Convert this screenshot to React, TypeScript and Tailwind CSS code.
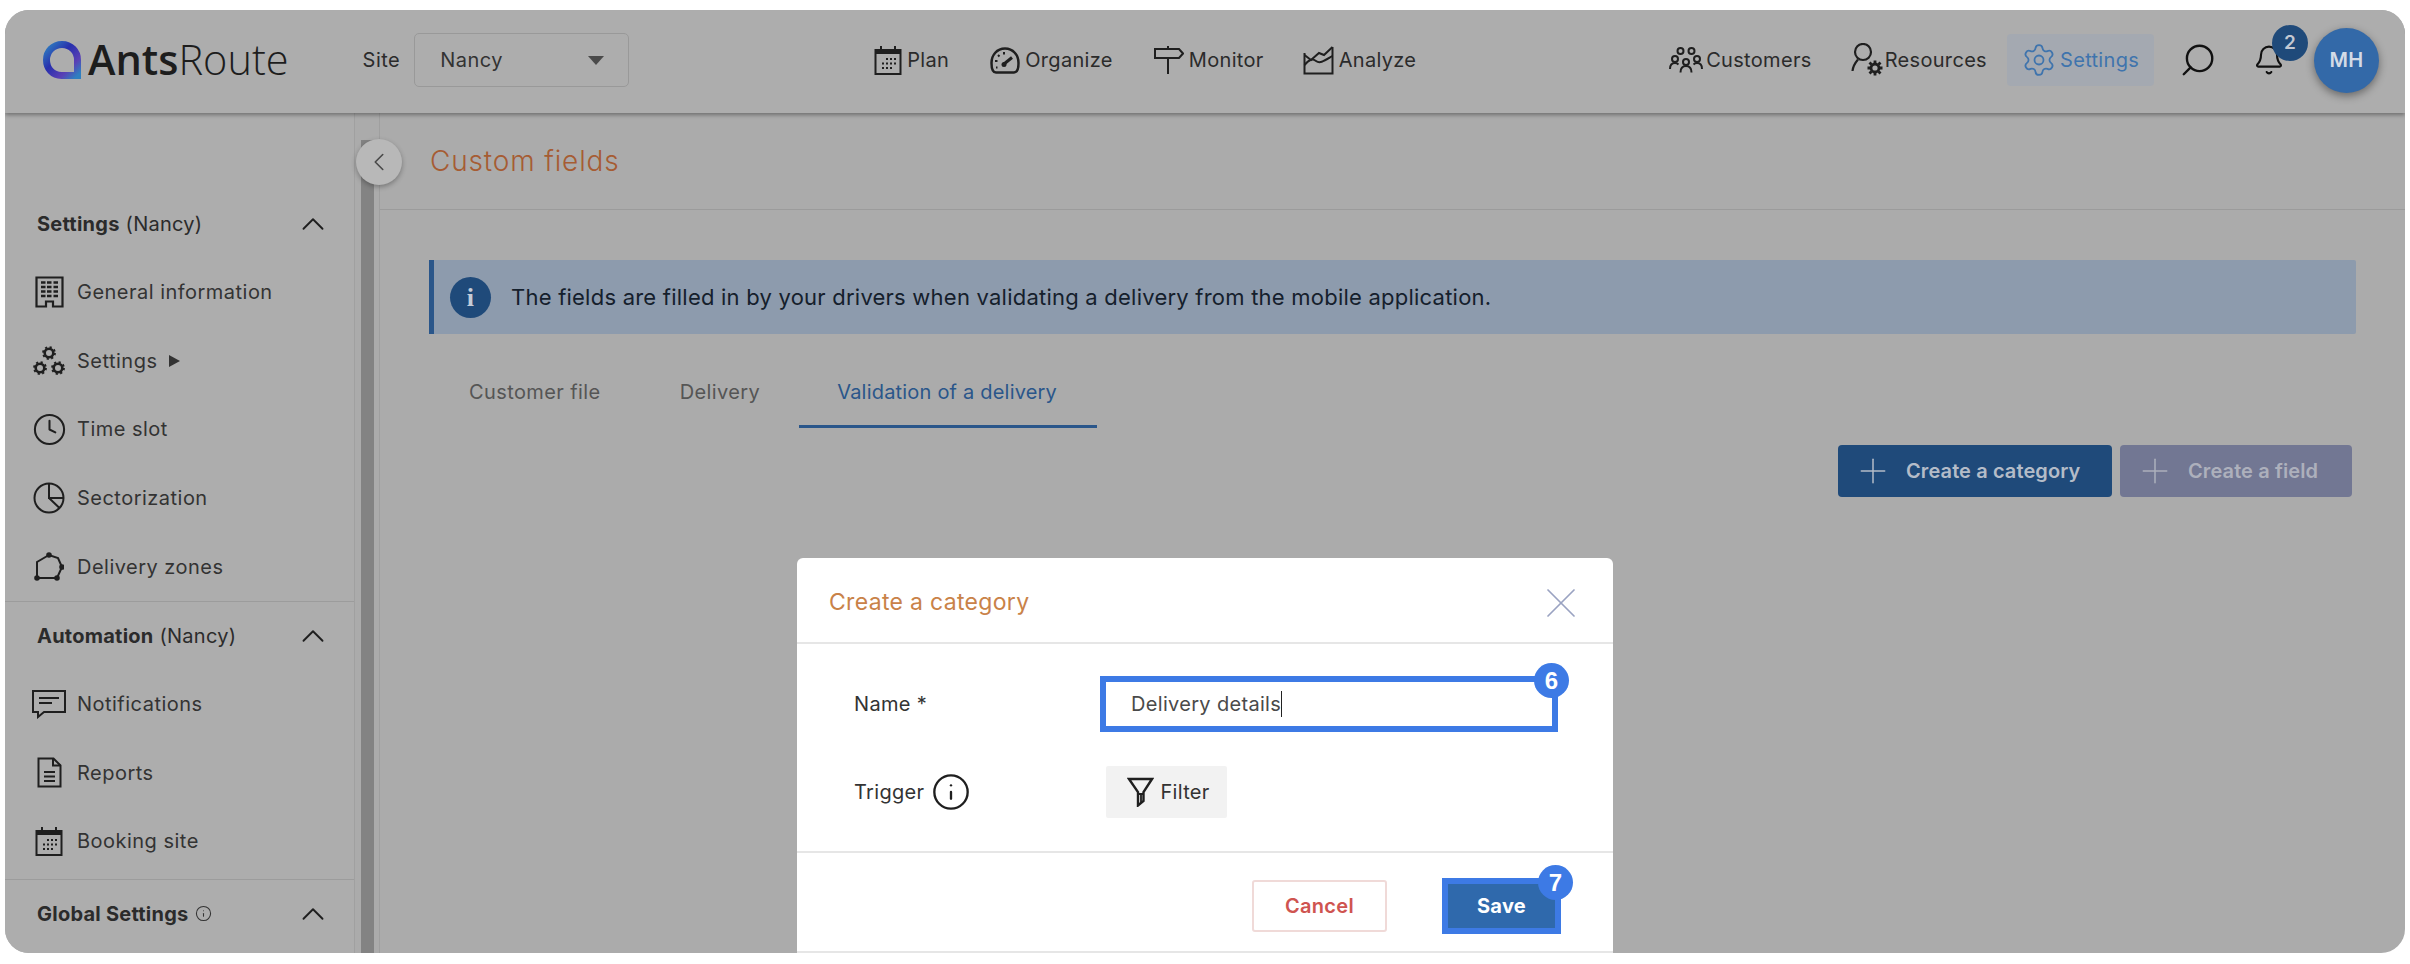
import { ChevronLeft, ChevronUp, Plus, X, Search, Bell, Clock, Info } from 'lucide-react'
import type { ReactNode } from 'react'

const ink = '#1f1f1f'

function Calendar() {
  return (
    <svg width="28" height="29" viewBox="0 0 28 29" fill="none" stroke={ink} strokeWidth="2">
      <rect x="1.500" y="4" width="25" height="24" />
      <path d="M1.500 6h25" strokeWidth="4" />
      <path d="M7 0v4M21 0v4" />
      <g strokeWidth="2.200">
        <path d="M12 13h2M16 13h2M20 13h2M8 17.500h2M12 17.500h2M16 17.500h2M20 17.500h2M8 22h2M12 22h2M16 22h2" />
      </g>
    </svg>
  )
}

function Gauge() {
  return (
    <svg width="30" height="27" viewBox="0 0 30 27" fill="none" stroke={ink} strokeWidth="2.500">
      <path d="M6 25.500C3 25.500 1.500 22 1.500 16C1.500 8 7 1.500 15 1.500C23 1.500 28.500 8 28.500 16C28.500 22 27 25.500 24 25.500Z" />
      <path d="M14 17L22 10.500" strokeWidth="3" />
      <circle cx="14" cy="17.500" r="2.500" fill={ink} stroke="none" />
      <path d="M14 5v2.500M8 8l1.500 1.500M5 14h2.500M6 20.500h1.500" strokeWidth="2" />
    </svg>
  )
}

function Signpost() {
  return (
    <svg width="30" height="30" viewBox="0 0 30 30" fill="none" stroke={ink} strokeWidth="2">
      <path d="M1 4h24l4 4.500-4 4.500H1zM14 1v3M14 13v16" />
    </svg>
  )
}

function Chart() {
  return (
    <svg width="31" height="30" viewBox="0 0 31 30" fill="none" stroke={ink} strokeWidth="2">
      <path d="M1.500 8v20.500h28V2" />
      <path d="M1.500 10L8 15L16 8L21 10L29.500 2" />
      <path d="M1.500 20C6 15 9 13 13 16C17 19 21 16 29.500 11" />
    </svg>
  )
}

function People() {
  return (
    <svg width="34" height="26" viewBox="0 0 34 26" fill="none" stroke={ink} strokeWidth="2">
      <circle cx="11.500" cy="4" r="3" />
      <circle cx="22.500" cy="4" r="3" />
      <circle cx="6" cy="12" r="3" />
      <circle cx="17" cy="15" r="3" />
      <circle cx="28" cy="12" r="3" />
      <path d="M1 22c0-4 2-6 5-6 1.500 0 2.500.5 3.500 1.500M33 22c0-4-2-6-5-6-1.500 0-2.500.5-3.500 1.500M11.500 25.500c0-4 2-6.500 5.500-6.500s5.500 2.500 5.500 6.500" />
    </svg>
  )
}

function PersonGear() {
  return (
    <svg width="34" height="34" viewBox="0 0 34 34" fill="none" stroke={ink} strokeWidth="2.200">
      <ellipse cx="12" cy="9" rx="8" ry="8" />
      <path d="M7 16.500C4 20 2 23 1.500 28" />
      <circle cx="24" cy="25" r="4" strokeWidth="2.800" />
      <path d="M24 17.500v3M24 29.500v3M16.500 25h3M28.500 25h3M18.500 19.500l2 2M27.500 28.500l2 2M18.500 30.500l2-2M27.500 21.500l2-2" strokeWidth="2.800" />
    </svg>
  )
}

function Building() {
  return (
    <svg width="29" height="32" viewBox="0 0 29 32" fill="none" stroke={ink} strokeWidth="2.200">
      <path d="M1.500 1.500h26v29H18v-5h-7v5H1.500z" />
      <path d="M6 6.500h4.500M12 6.500h4.500M18.500 6.500h4.500M6 11h4.500M12 11h4.500M18.500 11h4.500M6 15.500h4.500M12 15.500h4.500M18.500 15.500h4.500M6 20h4.500M12 20h4.500M18.500 20h4.500" strokeWidth="2.400" />
    </svg>
  )
}

function Gears() {
  const ring = (cx: number, cy: number) => (
    <g key={`${cx}-${cy}`}>
      <circle cx={cx} cy={cy} r="4.300" strokeWidth="2.600" />
      <circle cx={cx} cy={cy} r="6" strokeWidth="1.800" strokeDasharray="2.200 2.500" />
    </g>
  )
  return (
    <svg width="32" height="30" viewBox="0 0 32 30" fill="none" stroke={ink}>
      {ring(16, 7)}
      {ring(7, 22)}
      {ring(25, 22)}
    </svg>
  )
}

function Pie() {
  return (
    <svg width="32" height="32" viewBox="0 0 32 32" fill="none" stroke={ink} strokeWidth="2">
      <circle cx="16" cy="16" r="14.500" />
      <path d="M16 1.500V16H30.500M16 16l10.500 10" />
    </svg>
  )
}

function Zone() {
  return (
    <svg width="30" height="30" viewBox="0 0 30 30" fill="none" stroke={ink} strokeWidth="2">
      <path d="M3 26L3 10L15 3L24 6L28 15L23 26Z" />
      <circle cx="3" cy="26" r="1.800" fill={ink} />
      <circle cx="23" cy="26" r="1.800" fill={ink} />
      <circle cx="15" cy="3" r="1.800" fill={ink} />
      <circle cx="28" cy="15" r="1.800" fill={ink} />
    </svg>
  )
}

function Message() {
  return (
    <svg width="34" height="30" viewBox="0 0 34 30" fill="none" stroke={ink} strokeWidth="2">
      <path d="M1 2h32v21H12l-6 5v-5H1z" />
      <path d="M7 9h20M7 14h13" />
    </svg>
  )
}

function FileDoc() {
  return (
    <svg width="25" height="31" viewBox="0 0 25 31" fill="none" stroke={ink} strokeWidth="2">
      <path d="M1.500 1.500h15l7 7v21h-22z" />
      <path d="M16 1.500v7h7.500M7 15h11M7 19.500h11M7 24h11" />
    </svg>
  )
}

function Funnel() {
  return (
    <svg width="27" height="30" viewBox="0 0 27 30" fill="none" stroke={ink} strokeWidth="2.400" strokeLinejoin="miter">
      <path d="M2 2H25L16.500 15V24L11 28.500V15Z" />
      <path d="M11 17h5.500M14 18v8" strokeWidth="1.800" />
    </svg>
  )
}

function LogoMark() {
  return (
    <svg width="38" height="38" viewBox="0 0 38 38" fill="none">
      <defs>
        <linearGradient id="logo" x1="0" y1="0" x2="1" y2="1">
          <stop offset="0" stopColor="#2f7fc0" />
          <stop offset="0.4" stopColor="#2830ad" />
          <stop offset="0.75" stopColor="#5a3fb5" />
          <stop offset="1" stopColor="#2f7fc0" />
        </linearGradient>
      </defs>
      <path d="M34.500 34.500H18.500C9.500 34.500 3.500 27.500 3.500 19C3.500 10.500 10 3.500 19 3.500C28 3.500 34.500 10.500 34.500 19Z" stroke="url(#logo)" strokeWidth="7" />
    </svg>
  )
}

function NavItem({ icon, label, className }: { icon: ReactNode; label: string; className?: string }) {
  return (
    <div className={`flex items-center text-[20px] text-[#2b2b2b] ${className ?? 'gap-[5px]'}`}>
      {icon}
      <span>{label}</span>
    </div>
  )
}

function SideItem({ icon, label, extra }: { icon: ReactNode; label: string; extra?: ReactNode }) {
  return (
    <div className="flex h-[68.6px] items-center pl-[21px] text-[20px] text-[#333333]">
      <div className="flex w-[46px] shrink-0 justify-center">{icon}</div>
      <span className="ml-[5px]">{label}</span>
      {extra}
    </div>
  )
}

function SideHead({ bold, rest }: { bold: string; rest?: ReactNode }) {
  return (
    <div className="flex h-[68px] items-center pr-[22px] pl-[32px] text-[20px] tracking-[0.012em] text-[#2b2b2b]">
      <span className="font-bold">{bold}</span>
      {rest}
      <ChevronUp size={38} strokeWidth={1.2} className="ml-auto text-[#1f1f1f]" />
    </div>
  )
}

export default function App() {
  return (
    <div className="h-[964px] w-[2410px] bg-white px-[5px] pt-[10px] pb-[11px] font-['Inter',sans-serif] tracking-[0.03em]">
      <div className="relative flex h-full flex-col overflow-hidden rounded-[24px] bg-[#ababab]">
        <header className="z-10 flex h-[103px] shrink-0 items-center bg-[#adadad] pb-[3px] pl-[38px] shadow-[0_2px_4px_rgba(0,0,0,0.35)]">
          <LogoMark />
          <div className="ml-[7px] font-['Open_Sans',sans-serif] text-[41.5px] leading-none tracking-normal text-[#1d1d1d]">
            <span className="font-semibold">Ants</span>
            <span className="font-light">Route</span>
          </div>
          <span className="ml-[74px] text-[20px] text-[#2b2b2b]">Site</span>
          <div className="ml-[14px] flex h-[54px] w-[215px] items-center justify-between rounded-[5px] border border-[#999999] pr-[24px] pl-[25px] text-[20px] text-[#333333]">
            Nancy
            <span className="h-0 w-0 border-x-[8px] border-t-[9px] border-x-transparent border-t-[#4a4a4a]" />
          </div>
          <div className="ml-[245px] flex items-center gap-[41px] tracking-[0.02em]">
            <NavItem icon={<Calendar />} label="Plan" />
            <NavItem icon={<Gauge />} label="Organize" />
            <NavItem icon={<Signpost />} label="Monitor" />
            <NavItem icon={<Chart />} label="Analyze" className="-ml-[2px] gap-[5px]" />
          </div>
          <div className="mr-[26px] ml-auto flex items-center tracking-[0.02em]">
            <NavItem icon={<People />} label="Customers" className="gap-[3px]" />
            <NavItem icon={<PersonGear />} label="Resources" className="ml-[39px] gap-0" />
            <div className="ml-[20px] flex h-[52px] w-[147px] items-center gap-[3px] rounded-[4px] bg-[#a4a9b1] pl-[14px] text-[20px] text-[#3f74ad]">
              <svg width="36" height="36" viewBox="0 0 24 24" fill="none" stroke="currentColor" strokeWidth="1.200" strokeLinecap="round" strokeLinejoin="round">
                <path d="M9.671 4.136a2.34 2.34 0 0 1 4.659 0 2.34 2.34 0 0 0 3.319 1.915 2.34 2.34 0 0 1 2.33 4.033 2.34 2.34 0 0 0 0 3.831 2.34 2.34 0 0 1-2.33 4.033 2.34 2.34 0 0 0-3.319 1.915 2.34 2.34 0 0 1-4.659 0 2.34 2.34 0 0 0-3.32-1.915 2.34 2.34 0 0 1-2.33-4.033 2.34 2.34 0 0 0 0-3.831A2.34 2.34 0 0 1 6.35 6.051a2.34 2.34 0 0 0 3.319-1.915" />
                <circle cx="12" cy="12" r="3" />
              </svg>
              <span>Settings</span>
            </div>
            <Search size={38} strokeWidth={1.5} className="ml-[25px] -scale-x-100 text-[#111111]" />
            <div className="relative mr-[29px] ml-[36px]">
              <Bell size={32} strokeWidth={1.6} className="text-[#111111]" />
              <div className="absolute -top-[19px] left-[19px] flex h-[36px] w-[36px] items-center justify-center rounded-full bg-[#1f4a7a] text-[19px] font-semibold text-[#c2c8d2]">
                2
              </div>
            </div>
            <div className="flex h-[65px] w-[65px] items-center justify-center rounded-full bg-[#3369a8] text-[20px] font-semibold text-[#d3dbe6] shadow-[0_3px_8px_rgba(0,0,0,0.4)]">
              MH
            </div>
          </div>
        </header>

        <div className="relative flex min-h-0 flex-1">
          <aside className="flex w-[350px] shrink-0 flex-col border-r border-[#a0a0a0] bg-[#adadad] pt-[77px]">
            <SideHead bold="Settings" rest={<span className="ml-[6px] font-normal">(Nancy)</span>} />
            <SideItem icon={<Building />} label="General information" />
            <SideItem
              icon={<Gears />}
              label="Settings"
              extra={<span className="ml-[12px] h-0 w-0 border-y-[6px] border-l-[11px] border-y-transparent border-l-[#333333]" />}
            />
            <SideItem icon={<Clock size={35} strokeWidth={1.4} className="text-[#1f1f1f]" />} label="Time slot" />
            <SideItem icon={<Pie />} label="Sectorization" />
            <SideItem icon={<Zone />} label="Delivery zones" />
            <div className="border-t border-[#9c9c9c]">
              <SideHead bold="Automation" rest={<span className="ml-[6px] font-normal">(Nancy)</span>} />
            </div>
            <SideItem icon={<Message />} label="Notifications" />
            <SideItem icon={<FileDoc />} label="Reports" />
            <SideItem icon={<Calendar />} label="Booking site" />
            <div className="mt-[3px] border-t border-[#9c9c9c]">
              <SideHead bold="Global Settings" rest={<Info size={17} strokeWidth={1.5} className="ml-[6px] text-[#333333]" />} />
            </div>
          </aside>

          <div className="flex w-[25px] shrink-0 border-r border-[#9f9f9f] pt-[27px] pl-[6px]">
            <div className="w-[13px] bg-[#838383]" />
          </div>

          <div className="absolute top-[26px] left-[351px] flex h-[46px] w-[46px] items-center justify-center rounded-full bg-[#b8b8b8] text-[#4a4a4a] shadow-[0_2px_5px_rgba(0,0,0,0.3)]">
            <ChevronLeft size={30} strokeWidth={1.3} />
          </div>

          <main className="min-w-0 flex-1">
            <div className="flex h-[97px] items-center border-b border-[#9b9b9b] pl-[50px] text-[28px] font-light tracking-[0.03em] text-[#a65c33]">
              Custom fields
            </div>
            <div className="mt-[50px] mr-[49px] ml-[49px] flex h-[74px] items-center rounded-r-[2px] border-l-[5px] border-[#2a568a] bg-[#8d9bad] pl-[16px] text-[22px] tracking-[0.0104em] text-[#15202c]">
              <div className="flex h-[41px] w-[41px] items-center justify-center rounded-full bg-[#1f4a7a] font-['Liberation_Serif',serif] text-[26px] font-bold text-[#c4ccd8]">
                i
              </div>
              <span className="ml-[20px]">The fields are filled in by your drivers when validating a delivery from the mobile application.</span>
            </div>
            <div className="mt-[36px] ml-[49px] flex h-[58px] text-[20px] tracking-[0.02em] text-[#555555]">
              <div className="flex items-center px-[40px] pb-[14px]">Customer file</div>
              <div className="flex items-center px-[39px] pb-[14px]">Delivery</div>
              <div className="flex items-center border-b-[3px] border-[#2a568a] pr-[40px] pb-[11px] pl-[38px] tracking-[0.01em] text-[#2a568a]">Validation of a delivery</div>
            </div>
            <div className="mt-[17px] mr-[53px] flex justify-end gap-[8px] text-[20px] font-semibold tracking-[0.005em]">
              <div className="flex h-[52px] w-[274px] items-center rounded-[4px] bg-[#1f4a7a] pl-[15px] text-[#b4bcc8]">
                <Plus size={40} strokeWidth={0.9} />
                <span className="ml-[13px]">Create a category</span>
              </div>
              <div className="flex h-[52px] w-[232px] items-center rounded-[4px] bg-[#727793] pl-[15px] text-[#adb0bc]">
                <Plus size={40} strokeWidth={0.9} />
                <span className="ml-[13px]">Create a field</span>
              </div>
            </div>
          </main>
        </div>

        <div className="absolute top-[548px] left-[792px] h-[395px] w-[816px] overflow-hidden rounded-t-[6px] border-b-2 border-[#e6e6e6] bg-white tracking-[0.02em]">
          <div className="flex h-[86px] items-center justify-between border-b-2 border-[#e6e6e6] pt-[5px] pr-[39px] pl-[32px] text-[23px] text-[#c98248]">
            Create a category
            <X size={52} strokeWidth={0.8} className="-my-[13px] -mr-[13px] text-[#9aa3c2]" />
          </div>
          <div className="h-[209px] border-b-2 border-[#e6e6e6] pl-[57px]">
            <div className="flex items-center pt-[32px] text-[20px] text-[#333333]">
              <span className="w-[247px] shrink-0">Name *</span>
              <div className="relative -ml-[1px] flex h-[56px] w-[458px] items-center border-[6px] border-[#3d7ae5] pl-[25px] text-[#4a4a4a]">
                <span>Delivery details</span>
                <span className="h-[26px] w-px bg-[#222222]" />
                <div className="absolute -top-[19px] -right-[17px] flex h-[35px] w-[35px] items-center justify-center rounded-full bg-[#3d7ae5] font-['Liberation_Sans',sans-serif] text-[24px] font-bold tracking-normal text-white">
                  6
                </div>
              </div>
            </div>
            <div className="mt-[34px] flex items-center text-[20px] text-[#333333]">
              <span>Trigger</span>
              <Info size={40} strokeWidth={1.4} className="ml-[7px] text-[#1f1f1f]" />
              <div className="ml-[135px] flex h-[52px] w-[121px] items-center gap-[6px] rounded-[2px] bg-[#f2f2f2] pl-[21px]">
                <Funnel />
                <span>Filter</span>
              </div>
            </div>
          </div>
          <div className="flex items-center justify-end pt-[25px] pr-[52px] text-[20px] font-bold">
            <div className="flex h-[52px] w-[135px] items-center justify-center rounded-[3px] border-2 border-[#f0dad8] font-semibold text-[#cf5450]">Cancel</div>
            <div className="relative ml-[55px] flex h-[56px] w-[119px] items-center justify-center border-[6px] border-[#3d7ae5] bg-[#2f69ac] text-white">
              Save
              <div className="absolute -top-[19px] -right-[18px] flex h-[35px] w-[35px] items-center justify-center rounded-full bg-[#3d7ae5] font-['Liberation_Sans',sans-serif] text-[24px] font-bold tracking-normal text-white">
                7
              </div>
            </div>
          </div>
        </div>
      </div>
    </div>
  )
}
